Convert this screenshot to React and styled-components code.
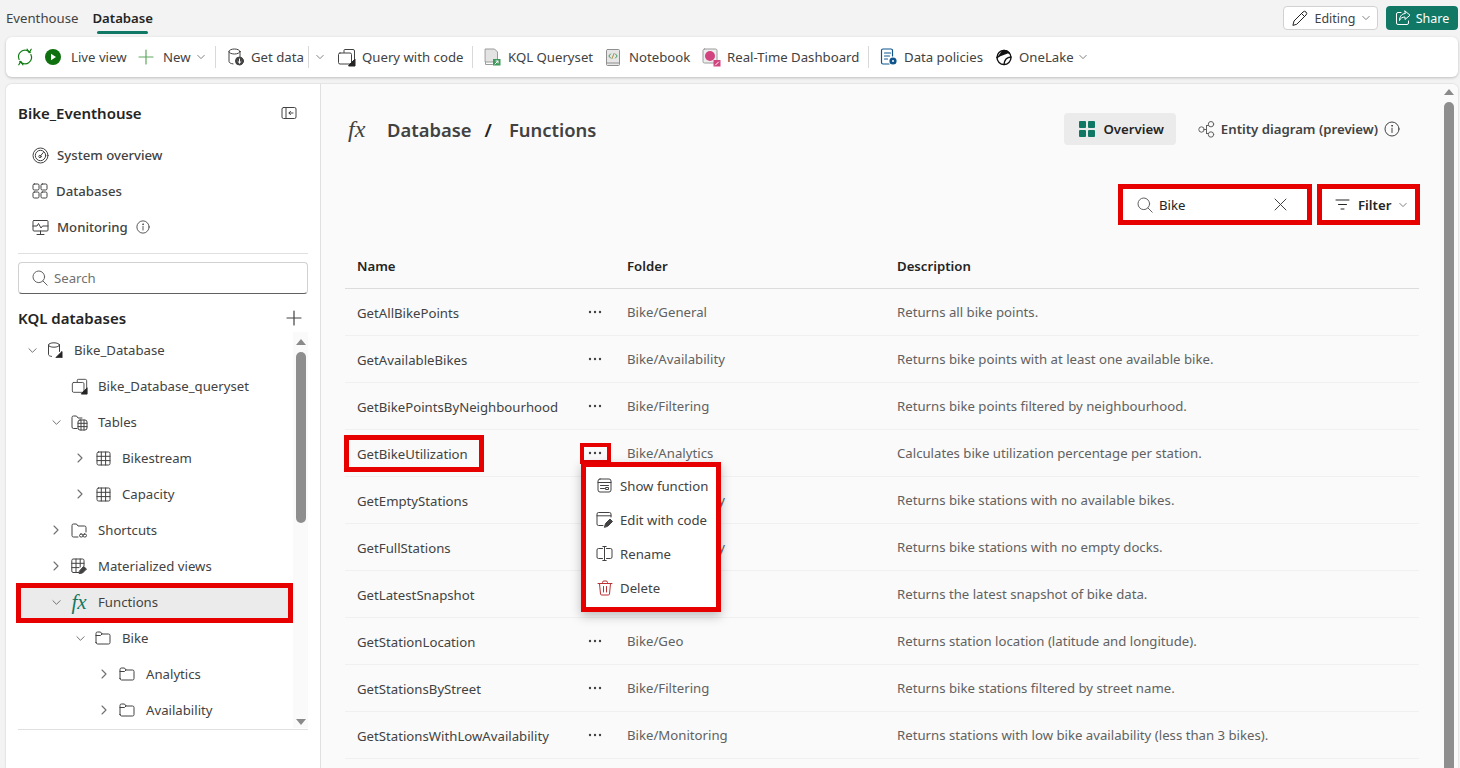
import styled, { createGlobalStyle } from "styled-components"

const Global = createGlobalStyle`
  html, body { margin: 0; height: 100%; overflow: hidden; }
  body {
    background: #f3f3f3;
    color: #424242;
    font-family: "Noto Sans", "Open Sans", Arial, sans-serif;
    font-size: 13.2px;
  }
  * { box-sizing: border-box; }
`

const RED = "#e60000"
const TEAL = "#117865"

const Svg = ({ size = 16, box = 16, children, color = "#424242", sw = 1 }) => (
  <svg width={size} height={size} viewBox={`0 0 ${box} ${box}`} fill="none" stroke={color} strokeWidth={sw} strokeLinecap="round" strokeLinejoin="round" style={{ flexShrink: 0 }}>
    {children}
  </svg>
)

const Chevron = ({ dir = "down", color = "#707070", size = 8 }) => (
  <Svg size={size} box={10} color={color} sw={1.1}>
    {dir === "down" ? <path d="M1 3l4 4 4-4" /> : <path d="M3 1l4 4-4 4" />}
  </Svg>
)
const Refresh = () => (
  <Svg size={18} box={18} color="#107c10" sw={1.2}>
    <path d="M5 3.6A6.8 6.8 0 0 1 14.2 4.5M13 14.4A6.8 6.8 0 0 1 3.8 13.5M3.1 11.5A6.8 6.8 0 0 1 5 3.6M14.9 6.5a6.8 6.8 0 0 1-1.9 7.9" />
    <path d="M11 1.2l2.2 3.4 2-3.4M7 16.8l-2.2-3.4-2 3.4" />
  </Svg>
)
const PlayCircle = () => (
  <Svg size={16} box={16} color="none">
    <circle cx="8" cy="8" r="8" fill="#0e700e" />
    <path d="M6 4.8l5 3.2-5 3.2z" fill="#fff" />
  </Svg>
)
const Plus = ({ color = "#5fa85f", size = 16 }) => (
  <Svg size={size} color={color} sw={1.2}>
    <path d="M8 1v14M1 8h14" />
  </Svg>
)
const GetDataIcon = () => (
  <Svg size={18} box={18}>
    <ellipse cx="7.5" cy="3.5" rx="5.5" ry="2.5" />
    <path d="M2 3.5v10c0 1.2 1.6 2.1 4 2.4M13 3.5v5" />
    <circle cx="12.5" cy="13" r="4" fill="#424242" />
    <path d="M12.5 11v4M11 13.6l1.5 1.4 1.5-1.4" stroke="#fff" />
  </Svg>
)
const QueryIcon = ({ size = 19 }) => (
  <Svg size={size} box={19}>
    <path d="M7 4.5V2.5a1 1 0 0 1 1-1h8a1.5 1.5 0 0 1 1.5 1.5v8" />
    <rect x="1.5" y="5" width="13" height="11" rx="1.5" />
    <path d="M12 17l6-6v7h-6z" fill="#242424" stroke="#242424" />
  </Svg>
)
const KqlIcon = () => (
  <Svg size={18} box={18} color="#9a9a9a">
    <path d="M2.5 1h9l3 3v10h-12z" fill="#e3e3e3" />
    <path d="M2.5 14v2.5h7" />
    <rect x="10" y="11" width="7.5" height="6.5" fill="#3e9a5b" stroke="none" />
    <path d="M12 16l3-3M13 13h2v2" stroke="#fff" />
  </Svg>
)
const NotebookIcon = () => (
  <Svg size={17} box={17} color="#8f8f8f">
    <rect x="1.5" y="0.5" width="13" height="16" rx="1" fill="#e6e6e6" />
    <path d="M1.5 14h13" />
    <path d="M5.5 5L3.8 7l1.7 2M10.5 5l1.7 2-1.7 2" stroke="#3c9a5b" />
    <path d="M9 4.5L7 9.5" stroke="#b08a3c" />
  </Svg>
)
const DashIcon = () => (
  <Svg size={19} box={19} color="#9a9a9a">
    <rect x="1" y="1" width="14" height="14" rx="1.5" fill="#eee" />
    <circle cx="8" cy="8" r="5" fill="#d1447f" stroke="none" />
    <rect x="11.5" y="12" width="7" height="6.5" fill="#d1447f" stroke="none" />
    <path d="M13.5 17l3-3" stroke="#fff" />
  </Svg>
)
const PoliciesIcon = () => (
  <Svg size={18} box={18} color="#0f548c" sw={1.2}>
    <path d="M9 16H3a1.5 1.5 0 0 1-1.5-1.5v-12A1.5 1.5 0 0 1 3 1h8a1.5 1.5 0 0 1 1.5 1.5V8" />
    <path d="M4.5 5h6M4.5 8h5M4.5 11h3" />
    <circle cx="13" cy="13" r="3" fill="#0f548c" />
    <circle cx="13" cy="13" r="1" fill="#fff" stroke="none" />
  </Svg>
)
const OneLakeIcon = () => (
  <Svg size={18} box={18} color="#111" sw={1.4}>
    <circle cx="9" cy="9.5" r="7" />
    <path d="M2 9.5C5.5 8 6 4 9 2.5c2.5 0 4 1 5 2.5" fill="#111" />
    <path d="M16 9c-4 .2-6.5 2-7 7.5" />
  </Svg>
)
const Pencil = () => (
  <Svg size={17} box={17} color="#242424">
    <path d="M2 15l1-4L12 2a1.8 1.8 0 0 1 3 3l-9 9z" />
    <path d="M10.5 3.5l3 3" />
  </Svg>
)
const ShareIcon = () => (
  <Svg size={16} color="#fff">
    <path d="M6 2.5H3A1.5 1.5 0 0 0 1.5 4v9A1.5 1.5 0 0 0 3 14.5h9a1.5 1.5 0 0 0 1.5-1.5v-2" />
    <path d="M10 1l5 4.2L10 9.5V7C7.5 7 5.5 8 4.5 10.5 4.5 7 6.5 3.7 10 3.5z" />
  </Svg>
)
const GridFilled = () => (
  <svg width="16" height="16" viewBox="0 0 16 16" fill={TEAL} style={{ flexShrink: 0 }}>
    <rect width="7" height="7" rx="1" />
    <rect x="9" width="7" height="7" rx="1" />
    <rect y="9" width="7" height="7" rx="1" />
    <rect x="9" y="9" width="7" height="7" rx="1" />
  </svg>
)
const EntityIcon = () => (
  <Svg size={17} box={17} color="#616161">
    <circle cx="3.5" cy="8.5" r="2.7" />
    <circle cx="13" cy="3.2" r="2.7" />
    <circle cx="13" cy="13.5" r="2.7" />
    <path d="M6.2 8.5h2.3M8.5 4.5v8M8.5 4.5h2M8.5 12.5h2" />
  </Svg>
)
const Info = ({ size = 16 }) => (
  <Svg size={size} color="#424242">
    <circle cx="8" cy="8" r="7" />
    <path d="M8 7.2V11.5" />
    <circle cx="8" cy="4.8" r=".4" fill="#424242" />
  </Svg>
)
const Search = () => (
  <Svg size={16} color="#616161">
    <circle cx="6.8" cy="6.8" r="5.8" />
    <path d="M11 11l4.2 4.2" />
  </Svg>
)
const Cross = () => (
  <Svg size={13} box={13} color="#424242">
    <path d="M1 1l11 11M12 1L1 12" />
  </Svg>
)
const FilterIcon = () => (
  <Svg size={15} box={15} color="#242424">
    <path d="M1 3h13M3.5 7.5h8M6 12h3" />
  </Svg>
)
const Collapse = () => (
  <Svg size={16} color="#424242">
    <rect x="1" y="2.5" width="14" height="11" rx="1.5" />
    <path d="M5 2.5v11" />
    <path d="M12 8H8M9.5 6.3L8 8l1.5 1.7" />
  </Svg>
)
const Gauge = () => (
  <Svg size={17} box={17}>
    <circle cx="8.5" cy="8.5" r="7.5" />
    <circle cx="8.5" cy="8.5" r="5.2" />
    <circle cx="8" cy="9.5" r="1.2" />
    <path d="M8.8 8.5l2.5-3" />
  </Svg>
)
const Squares = () => (
  <Svg size={16}>
    <rect x="1" y="1" width="6" height="6" rx="1.3" />
    <rect x="9" y="1" width="6" height="6" rx="1.3" />
    <rect x="1" y="9" width="6" height="6" rx="1.3" />
    <rect x="9" y="9" width="6" height="6" rx="1.3" />
  </Svg>
)
const MonitorIcon = () => (
  <Svg size={17} box={17}>
    <rect x="1" y="1.5" width="15" height="10.5" rx="1" />
    <path d="M1 7h4l1.5-2.5L9 9l1.5-2H16M8.5 12v3M5 15.5h7" />
  </Svg>
)
const DbIcon = () => (
  <Svg size={16}>
    <ellipse cx="7" cy="3" rx="5.5" ry="2.2" />
    <path d="M1.5 3v9.5c0 .9 1 1.6 3 1.9M12.5 3v6.5" />
    <path d="M9 15.5l6-6v6z" fill="#242424" stroke="#242424" />
  </Svg>
)
const FolderTable = () => (
  <Svg size={17} box={17}>
    <path d="M6 14.5H2.5A1.5 1.5 0 0 1 1 13V3.5A1.5 1.5 0 0 1 2.5 2h3l1.5 2h4" />
    <rect x="7" y="6" width="9" height="10" rx="2" />
    <path d="M7 9.3h9M7 12.6h9M10 6v10M13 6v10" />
  </Svg>
)
const TableIcon = () => (
  <Svg size={15} box={15}>
    <rect x="1" y="1" width="13" height="13" rx="1.5" />
    <path d="M1 5.3h13M1 9.6h13M5.3 1v13M9.6 1v13" />
  </Svg>
)
const FolderLink = () => (
  <Svg size={17} box={17}>
    <path d="M7 15H2.5A1.5 1.5 0 0 1 1 13.5V3.5A1.5 1.5 0 0 1 2.5 2h3l1.5 2h6.5A1.5 1.5 0 0 1 15 5.5V10" />
    <rect x="8.5" y="12" width="3.5" height="3" rx="1.5" />
    <rect x="12" y="12" width="3.5" height="3" rx="1.5" />
  </Svg>
)
const MatViewIcon = () => (
  <Svg size={16}>
    <path d="M8 14.5H2A1.5 1.5 0 0 1 .8 13V2.5A1.5 1.5 0 0 1 2 1h9.5A1.5 1.5 0 0 1 13 2.5V8" />
    <path d="M.8 5.3H13M.8 9.6H8M5 1v13.5M9.2 1v8" />
    <path d="M8.5 13l4-4.5 3 2.5-4 4-3 .5z" fill="#424242" />
  </Svg>
)
const Folder = () => (
  <Svg size={16}>
    <path d="M1 12.5V3.5A1.5 1.5 0 0 1 2.5 2h3L7 4h6.5A1.5 1.5 0 0 1 15 5.5v7a1.5 1.5 0 0 1-1.5 1.5h-11A1.5 1.5 0 0 1 1 12.5z" />
    <path d="M1 5.5h4.5L7 4" />
  </Svg>
)
const ShowFnIcon = () => (
  <Svg size={15} box={15}>
    <rect x="1" y="1" width="13" height="13" rx="2" />
    <path d="M1 4.5h13M3.5 7.5h8M3.5 10.5h4" />
    <rect x="9" y="9.5" width="2.5" height="2" />
  </Svg>
)
const EditCodeIcon = () => (
  <Svg size={17} box={17}>
    <path d="M15 6V3a1.5 1.5 0 0 0-1.5-1.5h-11A1.5 1.5 0 0 0 1 3v10a1.5 1.5 0 0 0 1.5 1.5H7M1 4.8h14" />
    <path d="M8.5 16l1-3.5L14 8l2.5 2.5L12 15z" fill="#424242" />
  </Svg>
)
const RenameIcon = () => (
  <Svg size={17} box={17}>
    <path d="M6.5 3.5h-4A1.5 1.5 0 0 0 1 5v7a1.5 1.5 0 0 0 1.5 1.5h4M10.5 3.5h4A1.5 1.5 0 0 1 16 5v7a1.5 1.5 0 0 1-1.5 1.5h-4" />
    <path d="M8.5 1.5v14M6.8 1.5h3.4M6.8 15.5h3.4" />
  </Svg>
)
const TrashIcon = () => (
  <Svg size={16} color="#bc2f32">
    <path d="M1 3.5h14M5.5 3.5V2.5A1.5 1.5 0 0 1 7 1h2a1.5 1.5 0 0 1 1.5 1.5v1" />
    <path d="M2.5 3.5l1 10.5A1.2 1.2 0 0 0 4.7 15h6.6a1.2 1.2 0 0 0 1.2-1l1-10.5" />
    <path d="M6.5 6.5v5.5M9.5 6.5v5.5" />
  </Svg>
)

const TopBar = styled.header`
  height: 37px;
  display: flex;
  align-items: flex-start;
  padding: 6px 2px 0 6px;
`
const TopTab = styled.div`
  position: relative;
  height: 25px;
  line-height: 24px;
  margin-right: 14px;
  font-weight: ${(p) => (p.$active ? 600 : 400)};
  color: ${(p) => (p.$active ? "#242424" : "#424242")};
  &::after {
    content: "";
    display: ${(p) => (p.$active ? "block" : "none")};
    position: absolute;
    left: 5px;
    right: 5px;
    bottom: -3px;
    height: 3px;
    border-radius: 2px;
    background: ${TEAL};
  }
`
const TopActions = styled.div`
  margin-left: auto;
  display: flex;
  gap: 8px;
`
const EditingButton = styled.button`
  width: 95px;
  height: 24px;
  display: flex;
  align-items: center;
  justify-content: center;
  gap: 6px;
  font: inherit;
  font-size: 12.5px;
  color: #424242;
  background: #fff;
  border: 1px solid #d1d1d1;
  border-radius: 4px;
`
const ShareButton = styled.button`
  width: 72px;
  height: 24px;
  display: flex;
  align-items: center;
  justify-content: center;
  gap: 5px;
  font: inherit;
  font-size: 12.5px;
  color: #fff;
  background: ${TEAL};
  border: 0;
  border-radius: 4px;
`
const Ribbon = styled.nav`
  height: 40px;
  margin: 0 2px 7px 6px;
  padding-left: 10px;
  display: flex;
  align-items: center;
  background: #fff;
  border-radius: 6px;
  box-shadow: 0 1px 3px rgba(0, 0, 0, 0.22);
`
const RibbonItem = styled.div`
  display: flex;
  align-items: center;
  gap: ${(p) => p.$gap || 7}px;
  margin-left: ${(p) => p.$left || 0}px;
  white-space: nowrap;
`
const RibbonLabel = styled.span`
  width: ${(p) => p.$w}px;
  white-space: nowrap;
`
const RibbonSep = styled.span`
  width: 1px;
  height: 22px;
  margin-left: ${(p) => p.$left}px;
  background: #d9d9d9;
`
const Layout = styled.div`
  height: 684px;
  margin: 0 2px 0 6px;
  display: flex;
  border-radius: 6px 6px 0 0;
  overflow: hidden;
  box-shadow: 0 0 2px rgba(0, 0, 0, 0.2);
`
const Sidebar = styled.aside`
  width: 315px;
  padding: 0 12px;
  background: #fff;
  border-right: 1px solid #e0e0e0;
`
const SideTitle = styled.div`
  height: 53px;
  display: flex;
  align-items: center;
  justify-content: space-between;
  padding: 5px 11px 0 0;
  font-size: 15px;
  font-weight: 600;
  color: #242424;
`
const NavItem = styled.div`
  height: 36px;
  display: flex;
  align-items: center;
  gap: 8px;
  padding-left: 14px;
  font-weight: 500;
`
const Divider = styled.hr`
  margin: 8px 0;
  border: 0;
  border-top: 1px solid #e0e0e0;
`
const SideSearch = styled.div`
  height: 32px;
  display: flex;
  align-items: center;
  gap: 6px;
  padding-left: 13px;
  color: #707070;
  border: 1px solid #d1d1d1;
  border-bottom-color: #616161;
  border-radius: 4px;
`
const SideHeading = styled.div`
  height: 38px;
  display: flex;
  align-items: center;
  justify-content: space-between;
  padding: 9px 6px 0 0;
  font-size: 15px;
  font-weight: 600;
  color: #242424;
`
const TreeArea = styled.div`
  display: flex;
  height: 398px;
  padding-bottom: 1px;
  border-bottom: 1px solid #e0e0e0;
`
const Tree = styled.ul`
  width: 275px;
  margin: 0;
  padding: 0;
  list-style: none;
`
const TreeRow = styled.li`
  position: relative;
  height: 36px;
  display: flex;
  align-items: center;
  padding-left: ${(p) => 8 + p.$level * 24}px;
  background: ${(p) => (p.$selected ? "#ebebeb" : "transparent")};
  &::after {
    content: "";
    display: ${(p) => (p.$selected ? "block" : "none")};
    position: absolute;
    inset: -1px 0 -3px -2px;
    border: 5px solid ${RED};
  }
`
const ChevronSlot = styled.span`
  width: 12px;
  margin-right: 8px;
  display: flex;
  justify-content: center;
`
const TreeIcon = styled.span`
  width: 18px;
  margin-right: 10px;
  display: flex;
  justify-content: center;
`
const FxGlyph = styled.span`
  font-family: "Liberation Serif", serif;
  font-style: italic;
  font-weight: 400;
  font-size: ${(p) => p.$size}px;
  line-height: 1;
  color: ${(p) => p.$color};
  white-space: nowrap;
`
const ScrollTrack = styled.div`
  width: ${(p) => p.$width}px;
  flex-shrink: 0;
  display: flex;
  flex-direction: column;
  align-items: center;
  padding: ${(p) => p.$top}px 0 ${(p) => p.$bottom || 0}px;
  background: #fafafa;
`
const ArrowUp = styled.span`
  width: 0;
  height: 0;
  border: 5px solid transparent;
  border-top: 0;
  border-bottom: 6px solid #8a8a8a;
`
const ArrowDown = styled(ArrowUp)`
  border: 5px solid transparent;
  border-bottom: 0;
  border-top: 6px solid #8a8a8a;
`
const ScrollThumb = styled.span`
  width: 10px;
  height: ${(p) => p.$height}px;
  margin-top: 7px;
  flex-shrink: 0;
  background: #8e8e8e;
  border-radius: 5px;
`
const ThumbGap = styled.span`
  flex: 1;
`
const Main = styled.main`
  flex: 1;
  display: flex;
  background: #fafafa;
  overflow: hidden;
`
const Content = styled.div`
  flex: 1;
  padding: 29px 21px 0 24px;
`
const PageHead = styled.div`
  display: flex;
  align-items: center;
  height: 32px;
`
const Crumbs = styled.h1`
  margin: 0;
  display: flex;
  align-items: center;
  font-size: 18.4px;
  font-weight: 600;
  color: #424242;
`
const CrumbIcon = styled.span`
  width: 42px;
  padding-left: 3px;
`
const CrumbSlash = styled.span`
  margin: 0 17px 0 13px;
  color: #242424;
`
const ViewTabs = styled.div`
  margin-left: auto;
  margin-right: 19px;
  display: flex;
  align-items: center;
`
const ViewTab = styled.div`
  height: 32px;
  display: flex;
  align-items: center;
  gap: ${(p) => (p.$active ? 8 : 6)}px;
  padding: ${(p) => (p.$active ? "0 12px 0 15px" : "0 0 0 22px")};
  font-weight: 600;
  color: ${(p) => (p.$active ? "#242424" : "#424242")};
  background: ${(p) => (p.$active ? "#ebebeb" : "transparent")};
  border-radius: 4px;
  white-space: nowrap;
`
const FilterBar = styled.div`
  margin: 39px -1px 0 0;
  display: flex;
  justify-content: flex-end;
  gap: 5px;
`
const SearchBox = styled.div`
  width: 194px;
  height: 41px;
  display: flex;
  align-items: center;
  gap: 6px;
  padding: 0 20px 0 14px;
  background: #fff;
  border: 5px solid ${RED};
  color: #242424;
`
const ClearSlot = styled.span`
  margin-left: auto;
  display: flex;
`
const FilterButton = styled.div`
  width: 103px;
  height: 41px;
  display: flex;
  align-items: center;
  gap: 8px;
  padding-left: 13px;
  background: #fff;
  border: 5px solid ${RED};
  font-weight: 600;
  color: #242424;
`
const RowGrid = styled.div`
  display: grid;
  grid-template-columns: 223px 31px 286px 1fr;
  align-items: center;
  padding-left: 12px;
  border-bottom: 1px solid #f0f0f0;
  height: 47px;
`
const HeadRow = styled(RowGrid)`
  height: 41px;
  margin-top: 23px;
  padding-bottom: 5px;
  border-bottom-color: #dcdcdc;
  font-weight: 600;
  color: #242424;
`
const FolderCell = styled.div`
  padding-left: 16px;
  white-space: nowrap;
  color: ${(p) => (p.$head ? "#242424" : "#616161")};
`
const DescCell = styled.div`
  white-space: nowrap;
  color: #616161;
`
const NameCell = styled.div`
  padding-top: 2px;
`
const NameText = styled.span`
  position: relative;
  &::after {
    content: "";
    display: ${(p) => (p.$marked ? "block" : "none")};
    position: absolute;
    inset: -10px -16px -9px -13px;
    border: 5px solid ${RED};
  }
`
const DotsCell = styled.div`
  position: relative;
  height: 21px;
  display: flex;
  align-items: center;
  justify-content: center;
  padding-right: 2px;
  border: ${(p) => (p.$marked ? `4px solid ${RED}` : "0")};
`
const Menu = styled.ul`
  position: absolute;
  z-index: 3;
  left: -3px;
  top: 15px;
  width: 140px;
  margin: 0;
  padding: 2px 0;
  list-style: none;
  background: #fff;
  border: 5px solid ${RED};
  box-shadow: 0 4px 10px rgba(0, 0, 0, 0.25);
`
const MenuItem = styled.li`
  height: 34px;
  display: flex;
  align-items: center;
  gap: 7px;
  padding-left: 10px;
  white-space: nowrap;
`
const MenuIcon = styled.span`
  width: 17px;
  display: flex;
  justify-content: center;
`

const Dots = () => (
  <svg width="14" height="4" viewBox="0 0 14 4" fill="#424242">
    <circle cx="2" cy="2" r="1.2" />
    <circle cx="7" cy="2" r="1.2" />
    <circle cx="12" cy="2" r="1.2" />
  </svg>
)

const fxIcon = <FxGlyph $size={21} $color={TEAL}>fx</FxGlyph>

const treeRows = [
  { level: 0, open: "down", icon: <DbIcon />, label: "Bike_Database" },
  { level: 1, icon: <QueryIcon size={17} />, label: "Bike_Database_queryset" },
  { level: 1, open: "down", icon: <FolderTable />, label: "Tables" },
  { level: 2, open: "right", icon: <TableIcon />, label: "Bikestream" },
  { level: 2, open: "right", icon: <TableIcon />, label: "Capacity" },
  { level: 1, open: "right", icon: <FolderLink />, label: "Shortcuts" },
  { level: 1, open: "right", icon: <MatViewIcon />, label: "Materialized views" },
  { level: 1, open: "down", icon: fxIcon, label: "Functions", selected: true },
  { level: 2, open: "down", icon: <Folder />, label: "Bike" },
  { level: 3, open: "right", icon: <Folder />, label: "Analytics" },
  { level: 3, open: "right", icon: <Folder />, label: "Availability" },
]

const functions = [
  ["GetAllBikePoints", "Bike/General", "Returns all bike points."],
  ["GetAvailableBikes", "Bike/Availability", "Returns bike points with at least one available bike."],
  ["GetBikePointsByNeighbourhood", "Bike/Filtering", "Returns bike points filtered by neighbourhood."],
  ["GetBikeUtilization", "Bike/Analytics", "Calculates bike utilization percentage per station."],
  ["GetEmptyStations", "Bike/Availability", "Returns bike stations with no available bikes."],
  ["GetFullStations", "Bike/Availability", "Returns bike stations with no empty docks."],
  ["GetLatestSnapshot", "Bike/General", "Returns the latest snapshot of bike data."],
  ["GetStationLocation", "Bike/Geo", "Returns station location (latitude and longitude)."],
  ["GetStationsByStreet", "Bike/Filtering", "Returns bike stations filtered by street name."],
  ["GetStationsWithLowAvailability", "Bike/Monitoring", "Returns stations with low bike availability (less than 3 bikes)."],
]

export default function App() {
  return (
    <>
      <Global />
      <TopBar>
        <TopTab>Eventhouse</TopTab>
        <TopTab $active>Database</TopTab>
        <TopActions>
          <EditingButton><Pencil />Editing<Chevron /></EditingButton>
          <ShareButton><ShareIcon />Share</ShareButton>
        </TopActions>
      </TopBar>

      <Ribbon>
        <Refresh />
        <RibbonItem $left={11} $gap={10}><PlayCircle /><RibbonLabel $w={56}>Live view</RibbonLabel></RibbonItem>
        <RibbonItem $left={11} $gap={9}><Plus /><RibbonLabel $w={25}>New</RibbonLabel><Chevron /></RibbonItem>
        <RibbonSep $left={10} />
        <RibbonItem $left={11} $gap={6}><GetDataIcon /><RibbonLabel $w={53}>Get data</RibbonLabel></RibbonItem>
        <RibbonSep $left={4} />
        <RibbonItem $left={7}><Chevron /></RibbonItem>
        <RibbonItem $left={13} $gap={6}><QueryIcon /><RibbonLabel $w={102}>Query with code</RibbonLabel></RibbonItem>
        <RibbonSep $left={8} />
        <RibbonItem $left={10} $gap={7}><KqlIcon /><RibbonLabel $w={86}>KQL Queryset</RibbonLabel></RibbonItem>
        <RibbonItem $left={11} $gap={7}><NotebookIcon /><RibbonLabel $w={62}>Notebook</RibbonLabel></RibbonItem>
        <RibbonItem $left={11} $gap={6}><DashIcon /><RibbonLabel $w={132}>Real-Time Dashboard</RibbonLabel></RibbonItem>
        <RibbonSep $left={9} />
        <RibbonItem $left={11} $gap={6}><PoliciesIcon /><RibbonLabel $w={80}>Data policies</RibbonLabel></RibbonItem>
        <RibbonItem $left={11} $gap={6}><OneLakeIcon /><RibbonLabel $w={54}>OneLake</RibbonLabel><Chevron /></RibbonItem>
      </Ribbon>

      <Layout>
        <Sidebar>
          <SideTitle>Bike_Eventhouse<Collapse /></SideTitle>
          <NavItem><Gauge />System overview</NavItem>
          <NavItem><Squares />Databases</NavItem>
          <NavItem><MonitorIcon />Monitoring <Info size={14} /></NavItem>
          <Divider />
          <SideSearch><Search />Search</SideSearch>
          <SideHeading>KQL databases<Plus color="#424242" /></SideHeading>
          <TreeArea>
            <Tree>
              {treeRows.map((row) => (
                <TreeRow key={row.label} $level={row.level} $selected={row.selected}>
                  <ChevronSlot>{row.open && <Chevron dir={row.open} size={row.open === "right" ? 10 : 9} color="#707070" />}</ChevronSlot>
                  <TreeIcon>{row.icon}</TreeIcon>
                  {row.label}
                </TreeRow>
              ))}
            </Tree>
            <ScrollTrack $width={15} $top={7} $bottom={3}>
              <ArrowUp />
              <ScrollThumb $height={171} />
              <ThumbGap />
              <ArrowDown />
            </ScrollTrack>
          </TreeArea>
        </Sidebar>

        <Main>
          <Content>
            <PageHead>
              <Crumbs>
                <CrumbIcon><FxGlyph $size={24} $color="#424242">fx</FxGlyph></CrumbIcon>
                Database<CrumbSlash>/</CrumbSlash>Functions
              </Crumbs>
              <ViewTabs>
                <ViewTab $active><GridFilled />Overview</ViewTab>
                <ViewTab><EntityIcon />Entity diagram (preview)<Info /></ViewTab>
              </ViewTabs>
            </PageHead>

            <FilterBar>
              <SearchBox><Search />Bike<ClearSlot><Cross /></ClearSlot></SearchBox>
              <FilterButton><FilterIcon />Filter<Chevron /></FilterButton>
            </FilterBar>

            <HeadRow>
              <div>Name</div>
              <div />
              <FolderCell $head>Folder</FolderCell>
              <div>Description</div>
            </HeadRow>
            {functions.map(([name, folder, desc]) => {
              const marked = name === "GetBikeUtilization"
              return (
                <RowGrid key={name}>
                  <NameCell><NameText $marked={marked}>{name}</NameText></NameCell>
                  <DotsCell $marked={marked}>
                    <Dots />
                    {marked && (
                      <Menu>
                        <MenuItem><MenuIcon><ShowFnIcon /></MenuIcon>Show function</MenuItem>
                        <MenuItem><MenuIcon><EditCodeIcon /></MenuIcon>Edit with code</MenuItem>
                        <MenuItem><MenuIcon><RenameIcon /></MenuIcon>Rename</MenuItem>
                        <MenuItem><MenuIcon><TrashIcon /></MenuIcon>Delete</MenuItem>
                      </Menu>
                    )}
                  </DotsCell>
                  <FolderCell>{folder}</FolderCell>
                  <DescCell>{desc}</DescCell>
                </RowGrid>
              )
            })}
          </Content>
          <ScrollTrack $width={18} $top={5}>
            <ArrowUp />
            <ScrollThumb $height={680} />
          </ScrollTrack>
        </Main>
      </Layout>
    </>
  )
}
